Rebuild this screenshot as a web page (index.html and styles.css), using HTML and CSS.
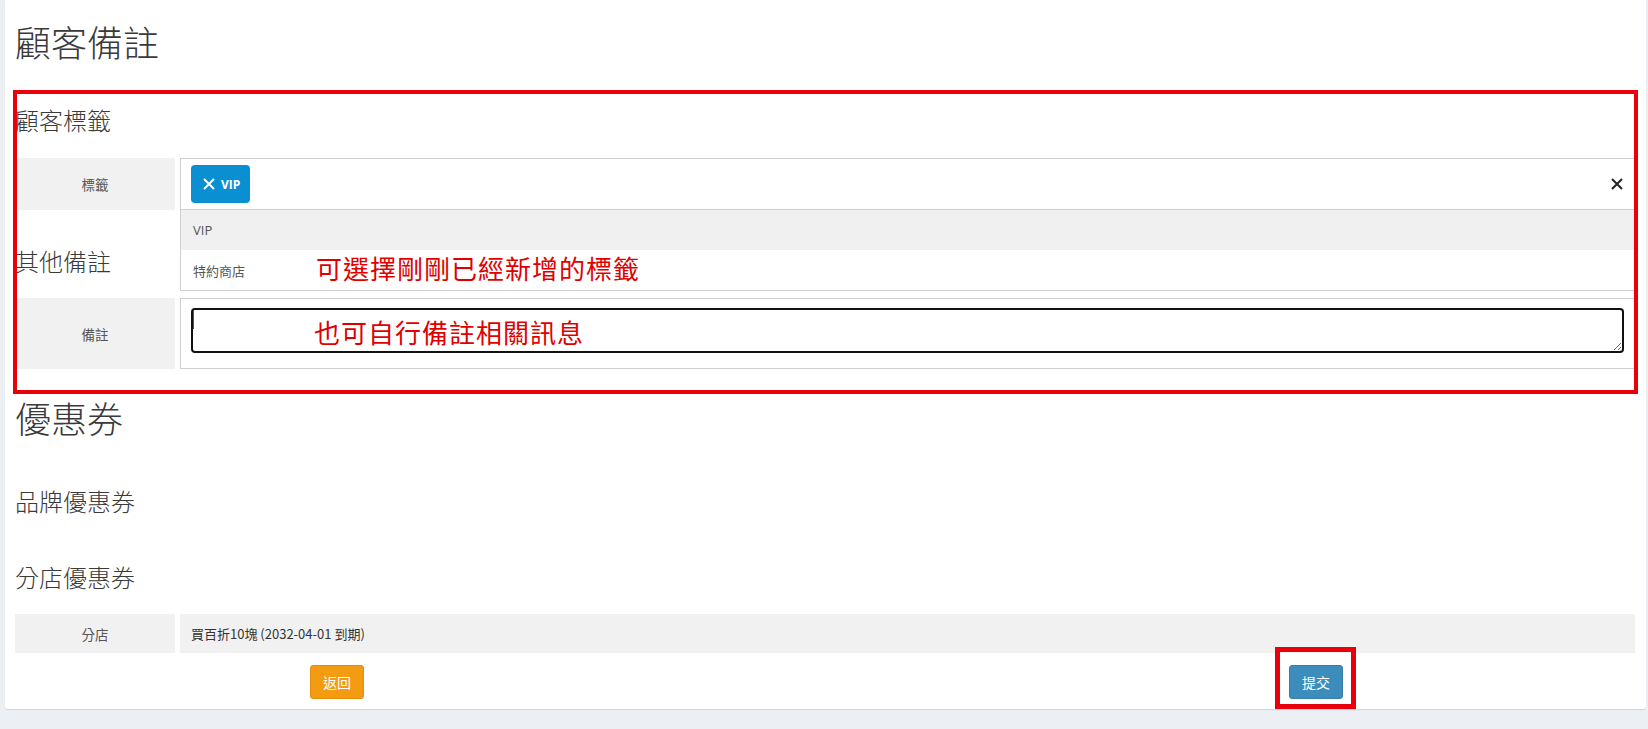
FILE: index.html
```html
<!DOCTYPE html>
<html lang="zh-Hant">
<head>
<meta charset="utf-8">
<title>顧客備註</title>
<link rel="stylesheet" href="styles.css">
</head>
<body>
<div class="card">
  <h1 class="page-title">顧客備註</h1>

  <h3 class="section-title mt-46">顧客標籤</h3>
  <div class="form-row mt-25">
    <div class="label-cell">標籤</div>
    <div class="value-cell select-cell">
      <div class="select-box">
        <span class="chip">
          <svg class="chip-x" width="12" height="12" viewBox="0 0 12 12"><path d="M1 1L11 11M11 1L1 11" stroke="#fff" stroke-width="2" fill="none"/></svg>
          <span class="chip-text">VIP</span>
        </span>
        <svg class="clear-x" width="12" height="12" viewBox="0 0 12 12"><path d="M1 1L11 11M11 1L1 11" stroke="#222" stroke-width="2" fill="none"/></svg>
      </div>
      <ul class="dropdown">
        <li class="option active">VIP</li>
        <li class="option">特約商店</li>
      </ul>
    </div>
  </div>

  <h3 class="section-title mt-38">其他備註</h3>
  <div class="form-row mt-24">
    <div class="label-cell">備註</div>
    <div class="value-cell note-cell">
      <textarea class="note-input"></textarea>
    </div>
  </div>

  <h1 class="page-title mt-28">優惠券</h1>
  <h3 class="section-title mt-51">品牌優惠券</h3>
  <h3 class="section-title mt-50">分店優惠券</h3>
  <div class="form-row mt-24">
    <div class="label-cell short">分店</div>
    <div class="value-cell coupon-cell">買百折10塊 (2032-04-01 到期)</div>
  </div>

  <div class="actions">
    <div class="action-slot"><button class="btn btn-warning">返回</button></div>
    <div></div>
    <div class="action-slot"><button class="btn btn-primary">提交</button></div>
  </div>

  <div class="anno-box box-main"></div>
  <div class="anno-box box-submit"></div>
  <div class="anno-text text-tags">可選擇剛剛已經新增的標籤</div>
  <div class="anno-text text-note">也可自行備註相關訊息</div>
</div>
</body>
</html>
```

FILE: styles.css
```css
html, body {
  margin: 0;
  padding: 0;
}

body {
  background: #ecf0f5;
  font-family: "Noto Sans CJK TC", sans-serif;
  color: #333;
  height: 729px;
  overflow: hidden;
}

.card {
  position: relative;
  display: flow-root;
  margin: 0 2px 0 5px;
  padding: 0 11px 10px 10px;
  background: #fff;
  border-radius: 0 0 3px 3px;
  box-shadow: 0 1px 1px rgba(0, 0, 0, 0.12);
}

.page-title {
  font-family: "Noto Sans CJK TC", sans-serif;
  font-weight: 300;
  font-size: 36px;
  line-height: 40px;
  margin: 21px 0 0 0;
  color: #3a3a3a;
}

.section-title {
  font-family: "Noto Sans CJK TC", sans-serif;
  font-weight: 300;
  font-size: 24px;
  line-height: 26px;
  margin: 0;
  color: #3a3a3a;
}

.mt-24 { margin-top: 24px; }
.mt-25 { margin-top: 25px; }
.mt-28 { margin-top: 28px; }
.mt-38 { margin-top: 38px; }
.mt-46 { margin-top: 46px; }
.mt-50 { margin-top: 50px; }
.mt-51 { margin-top: 51px; }

.form-row {
  display: grid;
  grid-template-columns: 160px 1fr;
  column-gap: 5px;
}

.label-cell {
  background: #f1f1f1;
  display: flex;
  align-items: center;
  justify-content: center;
  font-family: "Noto Sans CJK TC", sans-serif;
  font-size: 13.5px;
  color: #555;
}

.value-cell {
  min-width: 0;
}

/* tags select */
.select-cell {
  position: relative;
}

.select-box {
  box-sizing: border-box;
  height: 52px;
  border: 1px solid #cfcfcf;
  padding: 0 10px;
  display: flex;
  align-items: center;
  justify-content: space-between;
}

.chip {
  display: inline-flex;
  align-items: center;
  height: 38px;
  padding: 0 10px 0 12px;
  background: #0b8fd3;
  border-radius: 4px;
  color: #fff;
  gap: 6px;
}

.chip-x {
  display: block;
}

.chip-text {
  font-family: "Open Sans", sans-serif;
  font-weight: 700;
  font-size: 12px;
  letter-spacing: 0;
}

.clear-x {
  display: block;
  margin-right: 1px;
}

.dropdown {
  position: absolute;
  top: 100%;
  left: 0;
  right: 0;
  margin: 0;
  padding: 0;
  list-style: none;
  background: #fff;
  border: 1px solid #cfcfcf;
  border-top: 0;
  z-index: 2;
}

.option {
  height: 40px;
  display: flex;
  align-items: center;
  padding: 0 12px;
  font-family: "Open Sans", "Noto Sans CJK TC", sans-serif;
  font-size: 13px;
  color: #555;
}

.option.active {
  background: #f0f0f0;
}

/* note */
.note-cell {
  position: relative;
  border: 1px solid #cfcfcf;
  padding: 9px 10px 15px 10px;
}

.note-cell::after {
  content: "";
  position: absolute;
  left: 12px;
  top: 11px;
  width: 1px;
  height: 19px;
  background: #555;
}

.note-input {
  display: block;
  box-sizing: border-box;
  width: 100%;
  height: 45px;
  margin: 0;
  border: 2px solid #111;
  border-radius: 4px;
  outline: none;
  padding: 4px 6px;
  font-family: "Noto Sans CJK TC", sans-serif;
  font-size: 13px;
  background: #fff;
}

/* coupon */
.coupon-cell {
  background: #f1f1f1;
  height: 39px;
  display: flex;
  align-items: center;
  padding: 0 11px;
  font-family: "Noto Sans CJK TC", sans-serif;
  font-size: 13px;
  color: #333;
}

/* actions */
.actions {
  display: grid;
  grid-template-columns: 644px 1fr 638px;
  margin-top: 12px;
}

.action-slot {
  display: flex;
  justify-content: center;
}

.btn {
  box-sizing: border-box;
  height: 34px;
  padding: 0 12px;
  border-radius: 3px;
  font-family: "Noto Sans CJK TC", sans-serif;
  font-size: 14px;
  line-height: 32px;
  color: #fff;
  cursor: pointer;
}

.btn-warning {
  background: #f39c12;
  border: 1px solid #e08e0b;
}

.btn-primary {
  background: #3c8dbc;
  border: 1px solid #367fa9;
}

/* annotations */
.anno-box {
  position: absolute;
  box-sizing: border-box;
  border: 4px solid #e8000b;
  pointer-events: none;
  z-index: 5;
}

.box-main {
  left: 8px;
  top: 90px;
  width: 1625px;
  height: 304px;
}

.box-submit {
  left: 1270px;
  top: 647px;
  width: 81px;
  height: 62px;
  border-width: 5px;
}

.anno-text {
  position: absolute;
  font-family: "Noto Sans CJK TC", sans-serif;
  font-size: 26px;
  line-height: 26px;
  letter-spacing: 1px;
  color: #e00000;
  white-space: nowrap;
  z-index: 6;
}

.text-tags {
  left: 311px;
  top: 255px;
}

.text-note {
  left: 309px;
  top: 319px;
}
```
